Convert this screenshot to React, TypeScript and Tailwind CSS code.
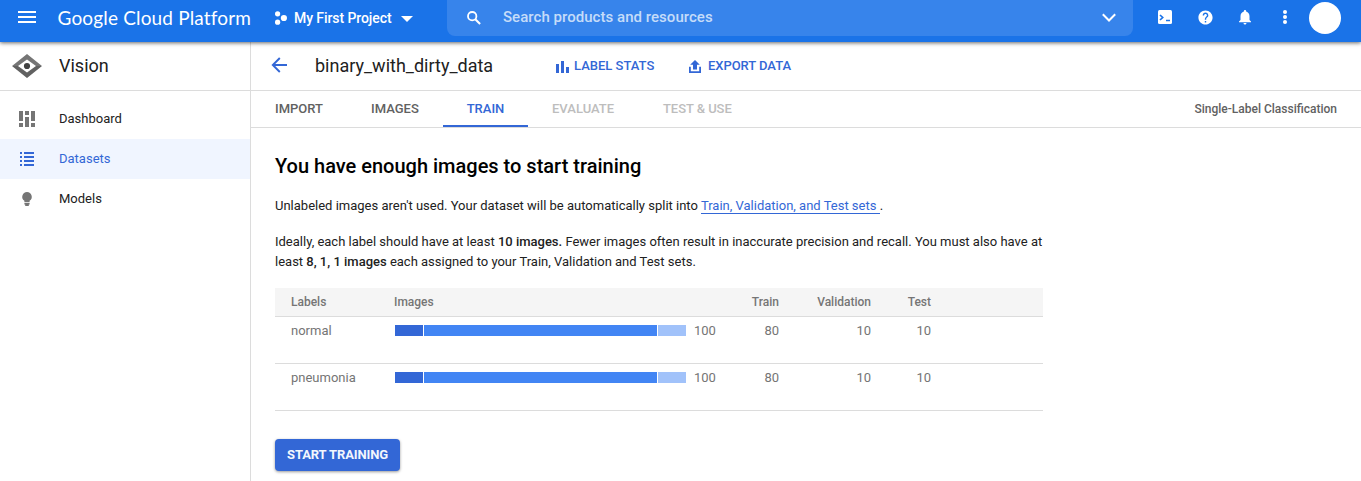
import type { ReactNode } from "react";
import { MdMenu, MdHelp, MdNotifications } from "react-icons/md";

function TopBar() {
  return (
    <header className="relative z-10 flex h-[42px] shrink-0 items-start bg-[#1a73e8] text-white shadow-[0_1px_4px_rgba(0,0,0,0.6)]">
      <MdMenu className="mt-[5px] ml-[15px] size-6 shrink-0" />
      <div className="ml-[18.5px] w-[216.5px] pt-[5px] font-[Lato,sans-serif] text-[19px] leading-[26px] tracking-[0.16px] whitespace-nowrap">
        Google Cloud Platform
      </div>
      <svg className="mt-[11px] h-[14px] w-[13px] shrink-0" viewBox="0 0 13 14" fill="currentColor">
        <circle cx="3.6" cy="2.8" r="2.6" />
        <circle cx="3.6" cy="11.2" r="2.6" />
        <circle cx="9.9" cy="7" r="3.1" />
      </svg>
      <div className="ml-[7px] flex w-[153px] items-start">
        <span className="w-[107px] pt-[8px] text-[14px] leading-5 font-medium tracking-[-0.08px] whitespace-nowrap">My First Project</span>
        <svg className="mt-[16px] h-[6px] w-[12px]" viewBox="0 0 12 6" fill="currentColor">
          <path d="M0 0h12L6 6z" />
        </svg>
      </div>
      <div className="flex h-9 w-[686px] shrink-0 items-start rounded-b-lg bg-[#3784eb]">
        <svg className="mt-[11px] ml-[20px] size-[14px] shrink-0" viewBox="0 0 14 14" fill="none" stroke="currentColor" strokeWidth="1.8">
          <circle cx="5.2" cy="5.2" r="4.2" />
          <path d="m8.3 8.3 4.8 4.8" strokeWidth="2.1" />
        </svg>
        <span className="ml-[22px] w-[598px] pt-[7px] text-[15px] leading-5 font-medium tracking-[0.04px] text-[#c5dcf9]">
          Search products and resources
        </span>
        <svg className="mt-[13px] h-[10px] w-[16px]" viewBox="0 0 16 10" fill="none" stroke="currentColor" strokeWidth="2">
          <path d="M1.8 1.3 8 7.5l6.2-6.2" />
        </svg>
      </div>
      <svg className="mt-[10px] ml-[25px] size-[14px] shrink-0" viewBox="0 0 14 14">
        <rect width="14" height="14" rx="1.5" fill="currentColor" />
        <path d="m2 5 2.7 2.5L2 10M8 10.5h4" fill="none" stroke="#1a73e8" strokeWidth="1.7" />
      </svg>
      <MdHelp className="mt-[8.5px] ml-[24.5px] size-[17px] shrink-0" />
      <MdNotifications className="mt-[8px] ml-[22.5px] size-[18px] shrink-0" />
      <svg className="mt-[10px] ml-[29px] h-[14px] w-1 shrink-0" viewBox="0 0 4 14" fill="currentColor">
        <circle cx="2" cy="2" r="2" />
        <circle cx="2" cy="7" r="2" />
        <circle cx="2" cy="12" r="2" />
      </svg>
      <div className="mt-[2px] ml-[22px] size-8 shrink-0 rounded-full bg-white" />
    </header>
  );
}

function NavItem({ icon, label, active = false }: { icon: ReactNode; label: string; active?: boolean }) {
  return (
    <a className={`flex h-10 items-center text-[13px] ${active ? "bg-[#f0f5ff] text-[#3367d6]" : "text-[#212121]"}`}>
      <span className="ml-[19px] flex w-10 items-center">{icon}</span>
      <span>{label}</span>
    </a>
  );
}

function Sidebar() {
  return (
    <aside className="flex w-[251px] shrink-0 flex-col border-r border-[#dcdcdc]">
      <div className="flex h-[49px] items-center border-b border-[#dcdcdc]">
        <svg className="ml-[12px] h-6 w-[30px]" viewBox="0 0 30 24">
          <path fill="#757575" d="M15 0 30 12H24L15 5.4 6 12H0z" />
          <path fill="#616161" d="M15 24 0 12h6L15 18.6 24 12H30z" />
          <circle cx="15" cy="12" r="3.1" fill="#424242" />
        </svg>
        <span className="ml-[17px] pb-[2px] text-[18px] text-[#212121]">Vision</span>
      </div>
      <nav className="pt-2">
        <NavItem
          label="Dashboard"
          icon={
            <svg className="size-4" viewBox="0 0 16 16" fill="#757575">
              <path d="M0 0h4v10H0zM0 12h4v4H0zM6 0h4v4H6zM6 6h4v10H6zM12 0h4v10h-4zM12 12h4v4h-4z" />
            </svg>
          }
        />
        <NavItem
          active
          label="Datasets"
          icon={
            <svg className="size-4" viewBox="0 0 16 16" fill="#3367d6">
              <path d="M1 1h2v2H1zM5 1h10v2H5zM1 5h2v2H1zM5 5h10v2H5zM1 9h2v2H1zM5 9h10v2H5zM1 13h2v2H1zM5 13h10v2H5z" />
            </svg>
          }
        />
        <NavItem
          label="Models"
          icon={
            <svg className="size-4" viewBox="0 0 16 16" fill="#757575">
              <path d="M8 1a4.8 4.8 0 0 0-2.6 8.8V11.2h5.2V9.8A4.8 4.8 0 0 0 8 1zM5.4 12h5.2v1.5H9.8V15H6.2v-1.5H5.4z" />
            </svg>
          }
        />
      </nav>
    </aside>
  );
}

function PageHeader() {
  return (
    <div className="flex h-[49px] items-center border-b border-[#dcdcdc]">
      <svg className="-mt-[2px] ml-[20px] size-[16px]" viewBox="0 0 16 16" fill="none" stroke="#3367d6" strokeWidth="1.9">
        <path d="M16 8H2M8.800 1 1.800 8l7 7" />
      </svg>
      <h1 className="ml-[28px] w-[241px] pb-[2px] text-[18px] text-[#212121]">binary_with_dirty_data</h1>
      <svg className="mt-[2px] h-3 w-[13px]" viewBox="0 0 13 12" fill="#3367d6">
        <path d="M0 3h3v9H0zM5 0h3v12H5zM10 6h3v6h-3z" />
      </svg>
      <span className="ml-[5px] w-[115px] text-[13px] font-medium text-[#3367d6]">LABEL STATS</span>
      <svg className="h-[13px] w-3" viewBox="0 0 12 13" fill="#3367d6">
        <path d="M6 0 10.8 4.8H8V9.4H4V4.8H1.200zM0 6.800h1.800v4.400h8.400V6.800H12V13H0z" />
      </svg>
      <span className="ml-[7px] text-[13px] font-medium tracking-[-0.05px] text-[#3367d6]">EXPORT DATA</span>
    </div>
  );
}

function Tabs() {
  const base = "flex h-9 items-center text-[13px] font-medium";
  return (
    <div className="flex h-[37px] border-b border-[#dcdcdc]">
      <span className={`${base} ml-6 w-24 text-[#616161]`}>IMPORT</span>
      <span className={`${base} w-[72px] text-[#616161]`}>IMAGES</span>
      <span className={`${base} w-[85px] justify-center border-b-2 border-[#3367d6] pt-0.5 text-[#3367d6]`}>TRAIN</span>
      <span className={`${base} ml-6 w-[111px] text-[#bdbdbd]`}>EVALUATE</span>
      <span className={`${base} tracking-[-0.06px] text-[#bdbdbd]`}>TEST &amp; USE</span>
      <span className="mr-6 ml-auto flex h-9 items-center text-[12px] font-medium text-[#616161]">Single-Label Classification</span>
    </div>
  );
}

const rows = [
  { label: "normal", total: 100, train: 80, validation: 10, test: 10 },
  { label: "pneumonia", total: 100, train: 80, validation: 10, test: 10 },
];

function LabelTable() {
  const grid = "grid grid-cols-[119px_325px_60px_92px_60px_112px] border-b";
  return (
    <div className="mt-4 w-[768px] text-[#757575]">
      <div className={`${grid} h-[29px] items-center border-[#dcdcdc] bg-[#f5f5f5] text-[12px] font-medium`}>
        <span className="pl-4">Labels</span>
        <span>Images</span>
        <span className="text-right">Train</span>
        <span className="text-right">Validation</span>
        <span className="text-right">Test</span>
      </div>
      {rows.map((r) => (
        <div key={r.label} className={`${grid} h-[47px] items-start border-[#dcdcdc] pt-1 text-[13px] leading-5`}>
          <span className="pl-4">{r.label}</span>
          <div className="flex items-start">
            <div className="mt-1 ml-px flex h-[11px] w-[291px] gap-px">
              <div className="w-[28px] bg-[#3367d6]" />
              <div className="w-[233px] bg-[#4285f4]" />
              <div className="w-[28px] bg-[#a1c2fa]" />
            </div>
            <span className="ml-2">{r.total}</span>
          </div>
          <span className="text-right">{r.train}</span>
          <span className="text-right">{r.validation}</span>
          <span className="text-right">{r.test}</span>
        </div>
      ))}
    </div>
  );
}

export default function App() {
  return (
    <div className="flex h-[481px] w-[1361px] flex-col overflow-hidden bg-white font-[Roboto,sans-serif]">
      <TopBar />
      <div className="flex flex-1">
        <Sidebar />
        <main className="flex flex-1 flex-col">
          <PageHeader />
          <Tabs />
          <section className="flex flex-col items-start pt-6 pl-6 text-[13px] leading-5 text-[#212121]">
            <h2 className="text-[20px] leading-7 font-medium text-black">You have enough images to start training</h2>
            <p className="mt-4">
              Unlabeled images aren't used. Your dataset will be automatically split into{" "}
              <a className="border-b border-[#3367d6] text-[#3367d6]">Train, Validation, and Test sets </a> .
            </p>
            <p className="mt-4 w-[780px]">
              Ideally, each label should have at least <b className="font-medium">10 images.</b> Fewer images often result in inaccurate precision and recall. You must also have at
              <br />
              least <b className="font-medium">8, 1, 1 images</b> each assigned to your Train, Validation and Test sets.
            </p>
            <LabelTable />
            <button className="mt-7 h-8 w-[125px] rounded-[4px] bg-[#3367d6] text-[13px] font-bold tracking-[-0.12px] text-[#f2f6fd] shadow-[0_1px_3px_rgba(0,0,0,0.4)]">
              START TRAINING
            </button>
          </section>
        </main>
      </div>
    </div>
  );
}
